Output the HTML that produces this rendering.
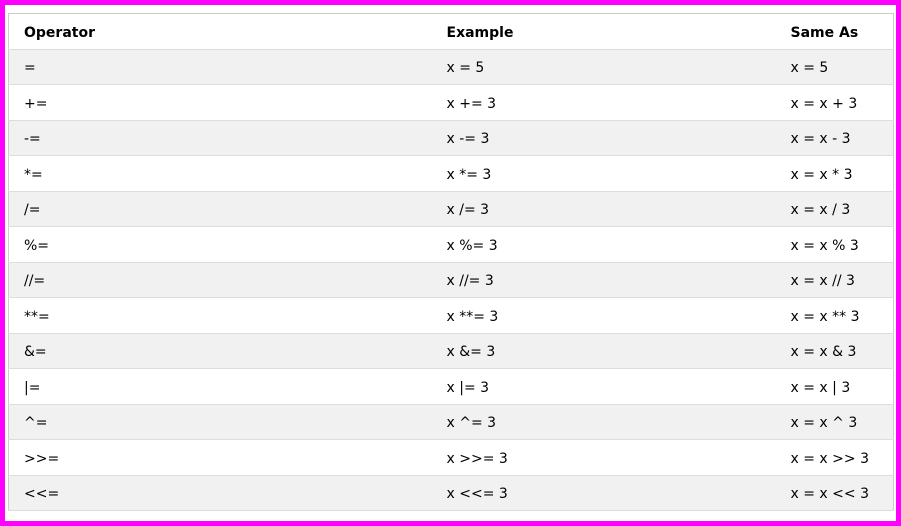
<!DOCTYPE html>
<html><head><style>
html,body{margin:0;padding:0;background:#fff;}
.frame{position:absolute;left:0;top:0;width:891px;height:516px;border:5px solid #ff00ff;background:#fff;}
table{position:absolute;left:8px;top:13px;width:886px;border-collapse:collapse;border:1px solid #ccc;font-family:"DejaVu Sans","Liberation Sans",sans-serif;font-size:14px;color:#000;}
td,th{height:31.5px;padding:3px 0 0 15px;text-align:left;border-bottom:1px solid #ddd;}
th{font-weight:bold;}
tr:nth-child(even){background:#f1f1f1;}
</style></head><body>
<div class="frame"></div>
<table>
<colgroup><col style="width:423px"><col style="width:344px"><col></colgroup>
<tr><th>Operator</th><th>Example</th><th>Same As</th></tr>
<tr><td>=</td><td>x = 5</td><td>x = 5</td></tr>
<tr><td>+=</td><td>x += 3</td><td>x = x + 3</td></tr>
<tr><td>-=</td><td>x -= 3</td><td>x = x - 3</td></tr>
<tr><td>*=</td><td>x *= 3</td><td>x = x * 3</td></tr>
<tr><td>/=</td><td>x /= 3</td><td>x = x / 3</td></tr>
<tr><td>%=</td><td>x %= 3</td><td>x = x % 3</td></tr>
<tr><td>//=</td><td>x //= 3</td><td>x = x // 3</td></tr>
<tr><td>**=</td><td>x **= 3</td><td>x = x ** 3</td></tr>
<tr><td>&amp;=</td><td>x &amp;= 3</td><td>x = x &amp; 3</td></tr>
<tr><td>|=</td><td>x |= 3</td><td>x = x | 3</td></tr>
<tr><td>^=</td><td>x ^= 3</td><td>x = x ^ 3</td></tr>
<tr><td>&gt;&gt;=</td><td>x &gt;&gt;= 3</td><td>x = x &gt;&gt; 3</td></tr>
<tr><td>&lt;&lt;=</td><td>x &lt;&lt;= 3</td><td>x = x &lt;&lt; 3</td></tr>
</table>
</body></html>
